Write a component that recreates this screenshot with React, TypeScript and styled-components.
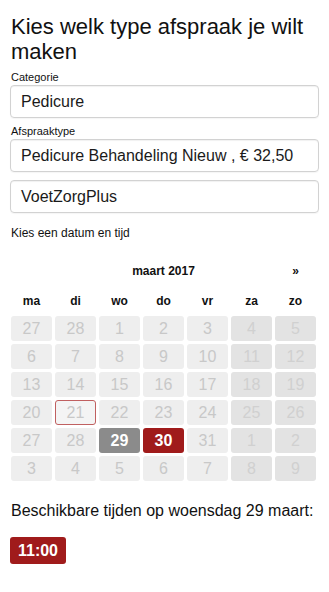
import React from 'react';
import styled, {createGlobalStyle} from 'styled-components';

const GlobalStyle = createGlobalStyle`
  * { box-sizing: border-box; }
  body {
    margin: 0;
    background: #fff;
    font-family: "Liberation Sans", Arial, sans-serif;
    color: #111;
  }
`

const Page = styled.div`
  padding: 0 10px;
`
const Title = styled.h1`
  font-size: 22px;
  font-weight: 400;
  line-height: 25px;
  margin: 14px 0 0 1px;
`
const Label = styled.label`
  display: block;
  font-size: 11px;
  line-height: 13px;
  margin: 7px 0 1px 1px;
`
const Field = styled.div<{gap?: number}>`
  height: 33px;
  margin-top: ${props => props.gap ?? 0}px;
  padding: 0 10px;
  display: flex;
  align-items: center;
  font-size: 16px;
  color: #1a1a1a;
  border: 1px solid #d2d2d2;
  border-radius: 4px;
  box-shadow: inset 0 1px 1px rgba(0, 0, 0, 0.06), 0 1px 1px rgba(0, 0, 0, 0.04);
  white-space: nowrap;
`
const Hint = styled.div`
  font-size: 12px;
  line-height: 14px;
  margin: 13px 0 0 1px;
`
const Calendar = styled.div`
  width: 305px;
  margin: 19px 0 0 1px;
`
const Grid = styled.div<{rowHeight: number}>`
  display: grid;
  grid-template-columns: repeat(7, 1fr);
  grid-auto-rows: ${props => props.rowHeight}px;
  column-gap: 3px;
  row-gap: 3px;
`
const HeadRow = styled(Grid)`
  font-size: 12px;
  font-weight: 700;
  line-height: 24px;
  text-align: center;
  margin-bottom: 6px;
`
const MonthTitle = styled.div`
  grid-column: 2 / span 5;
`
const NextLink = styled.div`
  grid-column: 7;
`
const WeekDays = styled(Grid)`
  font-size: 12px;
  font-weight: 700;
  line-height: 24px;
  text-align: center;
  margin-bottom: 3px;
`
type DayKind = 'normal' | 'weekend' | 'today' | 'selected' | 'available'
const dayBg: Record<DayKind, string> = {
  normal: '#eeeeee',
  weekend: '#e3e3e3',
  today: '#f4f4f4',
  selected: '#8b8b8b',
  available: '#a01b1b',
}
const Day = styled.div<{kind: DayKind}>`
  display: flex;
  align-items: center;
  justify-content: center;
  font-size: 16px;
  border-radius: 3px;
  background: ${props => dayBg[props.kind]};
  color: ${props => props.kind === 'selected' || props.kind === 'available' ? '#fff' : props.kind === 'weekend' ? '#d0d0d0' : '#c8c8c8'};
  font-weight: ${props => props.kind === 'selected' || props.kind === 'available' ? 700 : 400};
  border: ${props => props.kind === 'today' ? '1px solid #c06060' : 'none'};
`
const TimesTitle = styled.div`
  font-size: 16px;
  line-height: 18px;
  margin: 21px 0 0 1px;
`
const TimeButton = styled.button`
  margin-top: 17px;
  height: 27px;
  width: 56px;
  padding: 0;
  border: none;
  border-radius: 3px;
  background: #a01b1b;
  color: #fff;
  font-family: "Liberation Sans", Arial, sans-serif;
  font-size: 16px;
  font-weight: 700;
`

const weekDays = ['ma', 'di', 'wo', 'do', 'vr', 'za', 'zo']
const weeks = [
  [27, 28, 1, 2, 3, 4, 5],
  [6, 7, 8, 9, 10, 11, 12],
  [13, 14, 15, 16, 17, 18, 19],
  [20, 21, 22, 23, 24, 25, 26],
  [27, 28, 29, 30, 31, 1, 2],
  [3, 4, 5, 6, 7, 8, 9],
]

const kindOf = (week: number, col: number): DayKind => {
  if (week === 3 && col === 1) return 'today'
  if (week === 4 && col === 2) return 'selected'
  if (week === 4 && col === 3) return 'available'
  return col >= 5 ? 'weekend' : 'normal'
}

const App = () => {
  return (
    <>
      <GlobalStyle/>
      <Page>
        <Title>Kies welk type afspraak je wilt maken</Title>
        <Label>Categorie</Label>
        <Field>Pedicure</Field>
        <Label>Afspraaktype</Label>
        <Field>Pedicure Behandeling Nieuw , € 32,50</Field>
        <Field gap={8}>VoetZorgPlus</Field>
        <Hint>Kies een datum en tijd</Hint>
        <Calendar>
          <HeadRow rowHeight={24}>
            <MonthTitle>maart 2017</MonthTitle>
            <NextLink>»</NextLink>
          </HeadRow>
          <WeekDays rowHeight={24}>
            {weekDays.map(d => <div key={d}>{d}</div>)}
          </WeekDays>
          <Grid rowHeight={25}>
            {weeks.map((week, w) =>
              week.map((day, c) => (
                <Day key={`${w}-${c}`} kind={kindOf(w, c)}>{day}</Day>
              ))
            )}
          </Grid>
        </Calendar>
        <TimesTitle>Beschikbare tijden op woensdag 29 maart:</TimesTitle>
        <TimeButton>11:00</TimeButton>
      </Page>
    </>
  );
};

export default App;
